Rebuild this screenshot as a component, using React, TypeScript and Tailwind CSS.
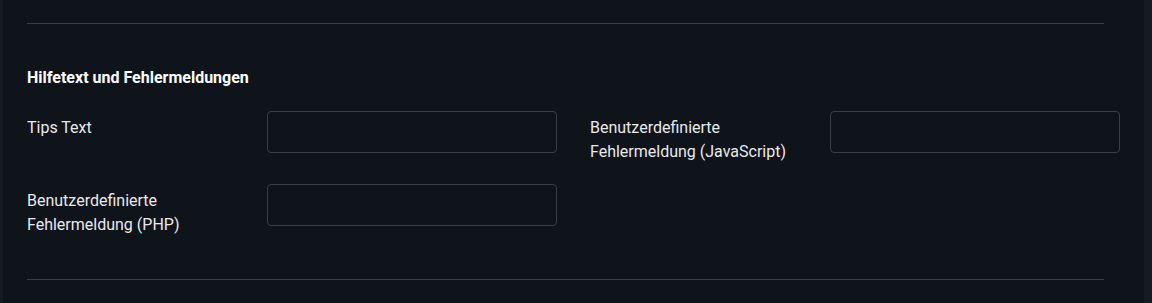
const fields = [
  { id: 'tips', label: ['Tips Text'] },
  { id: 'js', label: ['Benutzerdefinierte', 'Fehlermeldung (JavaScript)'] },
  { id: 'php', label: ['Benutzerdefinierte', 'Fehlermeldung (PHP)'] },
];

function Field({ label }: { label: string[] }) {
  return (
    <div className="flex items-start">
      <label className="w-[240px] shrink-0 pt-[5px] text-base leading-6 text-[#e8e9eb]">
        {label.map((l) => (
          <span key={l} className="block">{l}</span>
        ))}
      </label>
      <input
        type="text"
        className="h-[42px] w-[290px] rounded border border-[#3a3f47] bg-transparent px-3 text-base text-white outline-none"
      />
    </div>
  );
}

export default function App() {
  return (
    <div
      className="flex h-[303px] w-full bg-[#161a21] pl-[3px] pr-[8px]"
      style={{ fontFamily: 'Roboto, "Noto Sans", sans-serif' }}
    >
      <div className="min-w-0 flex-1 bg-[#0f141b] pl-6 pr-10 pt-[23px]">
        <hr className="border-t border-[#3a3f47]" />
        <h3 className="mt-[42px] text-base font-bold leading-6 text-white">
          Hilfetext und Fehlermeldungen
        </h3>
        <div className="mt-[21px] grid w-[1093px] grid-cols-[530px_530px] gap-x-[33px] gap-y-5">
          {fields.map((f) => (
            <Field key={f.id} label={f.label} />
          ))}
        </div>
        <hr className="mt-[42px] border-t border-[#3a3f47]" />
      </div>
    </div>
  );
}
